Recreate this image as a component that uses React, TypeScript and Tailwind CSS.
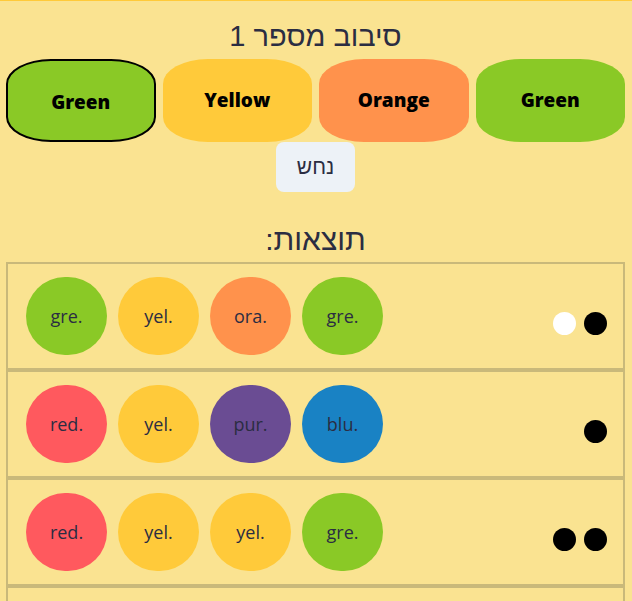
import { useState } from 'react';

type Peg = 'red' | 'yellow' | 'orange' | 'green' | 'blue' | 'purple';

const pegBg: Record<Peg, string> = {
  red: 'bg-[#ff595e]',
  yellow: 'bg-[#ffca3a]',
  orange: 'bg-[#ff924c]',
  green: 'bg-[#8ac926]',
  blue: 'bg-[#1982c4]',
  purple: 'bg-[#6a4c93]',
};

const pegLabel: Record<Peg, string> = {
  red: 'Red',
  yellow: 'Yellow',
  orange: 'Orange',
  green: 'Green',
  blue: 'Blue',
  purple: 'Purple',
};

interface Result {
  guess: Peg[];
  black: number;
  white: number;
}

const results: Result[] = [
  { guess: ['green', 'yellow', 'orange', 'green'], black: 1, white: 1 },
  { guess: ['red', 'yellow', 'purple', 'blue'], black: 1, white: 0 },
  { guess: ['red', 'yellow', 'yellow', 'green'], black: 2, white: 0 },
  { guess: ['blue', 'orange', 'red', 'purple'], black: 0, white: 2 },
];

const ResultRow = ({ guess, black, white }: Result) => (
  <div className="flex items-center justify-between border-2 border-[#c9b97a] py-[13px] pl-[18px] pr-[16px]">
    <div className="flex gap-[11px]">
      {guess.map((p, i) => (
        <span
          key={i}
          className={`${pegBg[p]} flex h-[78px] w-[81px] items-center justify-center rounded-full text-[18px] text-[#2b2d42]`}
        >
          {p.slice(0, 3)}.
        </span>
      ))}
    </div>
    <div className="mt-[15px] flex gap-[8px]">
      {Array.from({ length: white }).map((_, i) => (
        <span key={'w' + i} className="h-[23px] w-[23px] rounded-full bg-white" />
      ))}
      {Array.from({ length: black }).map((_, i) => (
        <span key={'b' + i} className="h-[23px] w-[23px] rounded-full bg-black" />
      ))}
    </div>
  </div>
);

export default function App() {
  const [current] = useState<Peg[]>(['green', 'yellow', 'orange', 'green']);
  const [selected, setSelected] = useState(0);

  return (
    <div className="min-h-screen border-t border-[#ffca3a] bg-[#fae391] pl-[6px] pr-[7px] pt-[17px] font-['Open_Sans','Liberation_Sans',sans-serif] text-[#2b2d42]">
      <h1 dir="rtl" className="mb-[5px] text-center font-['Liberation_Sans',sans-serif] text-[29px] leading-[36px]">
        סיבוב מספר 1
      </h1>

      {/* current guess */}
      <div className="grid grid-cols-4 gap-[7px]">
        {current.map((p, i) => (
          <button
            key={i}
            onClick={() => setSelected(i)}
            className={`${pegBg[p]} h-[83px] rounded-[30%] text-[19px] font-extrabold text-black ${
              selected === i ? 'border-2 border-black pt-[4px]' : ''
            }`}
          >
            {pegLabel[p]}
          </button>
        ))}
      </div>

      <div className="flex justify-center">
        <button className="h-[50px] w-[79px] rounded-lg bg-[#edf2f7] font-['Liberation_Sans',sans-serif] text-[21px] text-[#2b2d42]">
          נחש
        </button>
      </div>

      <h2 dir="rtl" className="mb-[4px] mt-[30px] text-center font-['Liberation_Sans',sans-serif] text-[30px] leading-[36px]">
        תוצאות:
      </h2>

      <div>
        {results.map((r, i) => (
          <ResultRow key={i} {...r} />
        ))}
      </div>
    </div>
  );
}
